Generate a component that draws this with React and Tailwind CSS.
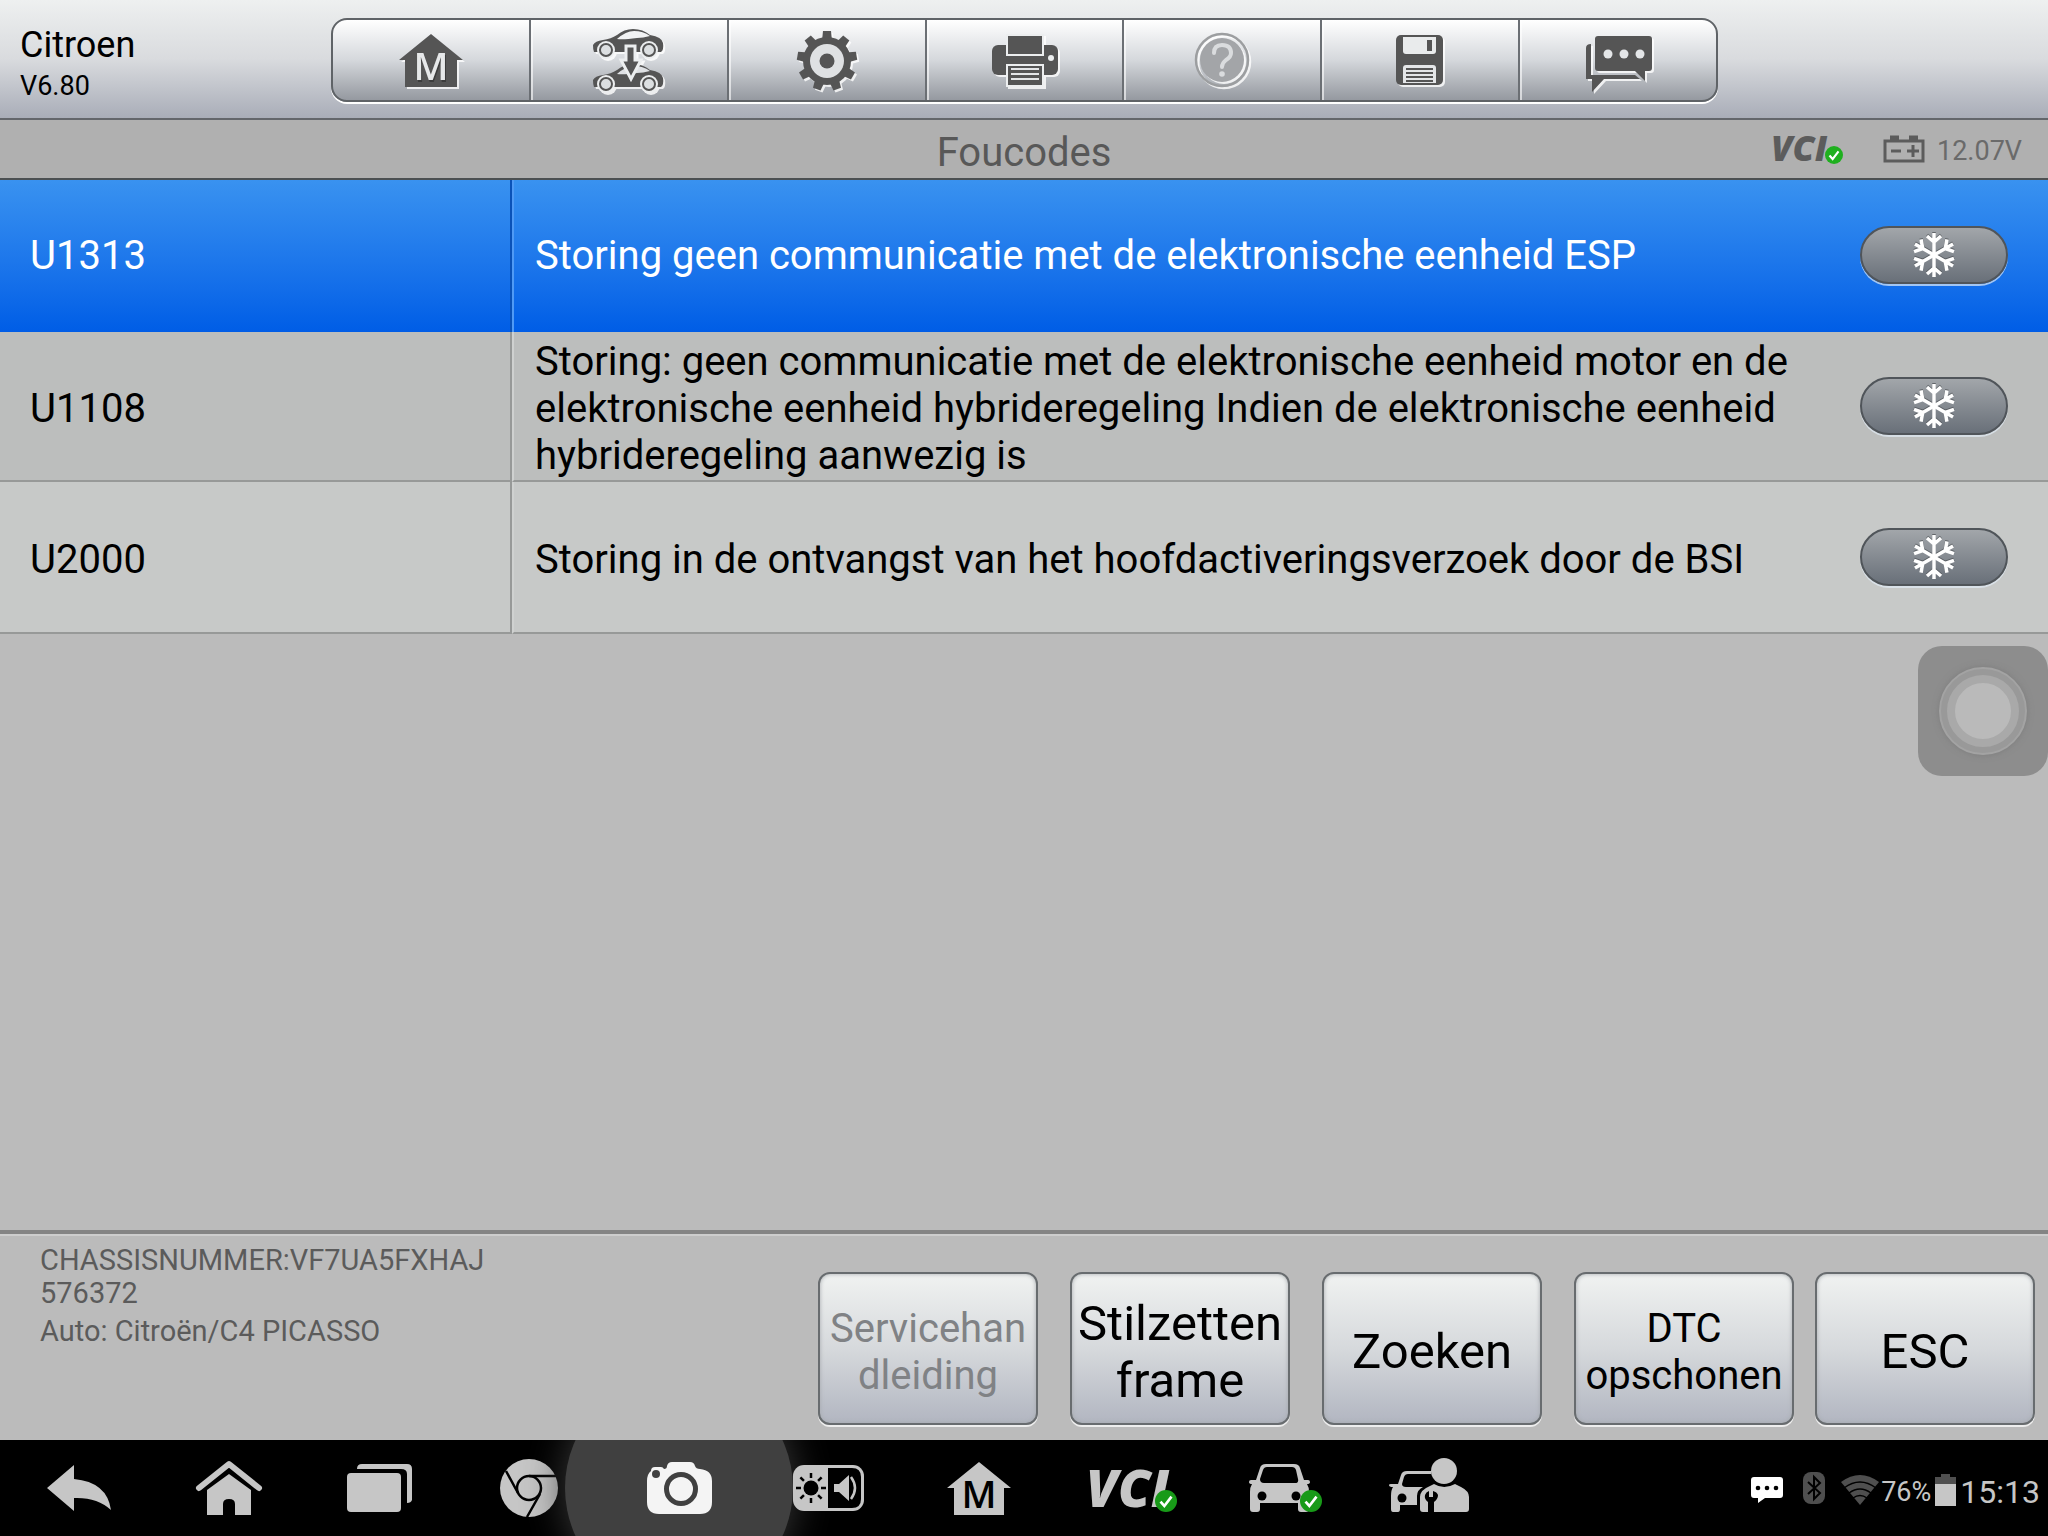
import React, { useState } from 'react';

const codes = [
  { code: 'U1313', text: 'Storing geen communicatie met de elektronische eenheid ESP' },
  {
    code: 'U1108',
    text: 'Storing: geen communicatie met de elektronische eenheid motor en de elektronische eenheid hybrideregeling Indien de elektronische eenheid hybrideregeling aanwezig is'
  },
  { code: 'U2000', text: 'Storing in de ontvangst van het hoofdactiveringsverzoek door de BSI' }
];

const actions = [
  { label: 'Servicehandleiding', lines: ['Servicehan', 'dleiding'], size: 'text-[40px] leading-[47px]', disabled: true },
  { label: 'Stilzetten frame', lines: ['Stilzetten', 'frame'], size: 'text-[49px] leading-[57px]' },
  { label: 'Zoeken', lines: ['Zoeken'], size: 'text-[49px] leading-[57px]' },
  { label: 'DTC opschonen', lines: ['DTC', 'opschonen'], size: 'text-[40px] leading-[47px]' },
  { label: 'ESC', lines: ['ESC'], size: 'text-[49px] leading-[57px]' }
];

function Check({ cx, cy, r, fill }) {
  return (
    <g>
      <circle cx={cx} cy={cy} r={r} fill={fill} />
      <path
        d={`M${cx - r * 0.5} ${cy + r * 0.05} l${r * 0.35} ${r * 0.4} l${r * 0.65} ${-r * 0.85}`}
        fill="none"
        stroke="#fff"
        strokeWidth={r * 0.24}
      />
    </g>
  );
}

/* Toolbar icons */

function HomeIcon() {
  return (
    <>
      <path d="M36 11 L68 37 H62 V64 H10 V37 H4 Z" />
      <text x="37" y="59" textAnchor="middle" fontSize="38" fontWeight="600" fill="#3c3c3c">M</text>
      <text x="36" y="57" textAnchor="middle" fontSize="38" fontWeight="600" fill="#e6e8e9">M</text>
    </>
  );
}

function SwapIcon() {
  const car = 'M0 22 Q2 18 10 17 Q18 16 24 12 Q31 6 40 6 Q50 6 57 12 Q69 14 70 20 Q71 27 68 29 H1 Q0 27 0 22 Z';
  const wheel = (cx, cy) => (
    <g key={cx + '-' + cy}>
      <circle cx={cx} cy={cy} r="9" fill="#eceeef" />
      <circle cx={cx} cy={cy} r="6" fill="#dcdfe1" stroke="#555" strokeWidth="2" />
    </g>
  );
  return (
    <>
      <path d={car} />
      <path d="M24 16 Q33 8 41 8 Q50 8 57 13 Q50 15 44 15 Q30 17 24 16 Z" fill="#f1f2f3" />
      <path d={car} transform="translate(0 35)" />
      <path d="M24 51 Q33 43 41 43 Q50 43 57 48 Q50 50 44 50 Q30 52 24 51 Z" fill="#dfe1e4" />
      {wheel(13, 27)}
      {wheel(56, 27)}
      {wheel(13, 61)}
      {wheel(56, 61)}
      <path d="M33 23 H42 V37 H48 L38 56 L28 37 H33 Z" stroke="#eceeef" strokeWidth="3" />
    </>
  );
}

function GearIcon() {
  return (
    <>
      {[0, 40, 80, 120, 160, 200, 240, 280, 320].map((a) => (
        <path key={a} d="M31 18 L32 8 H40 L41 18 Z" transform={`rotate(${a} 36 38)`} />
      ))}
      <circle cx="36" cy="38" r="24" />
      <circle cx="36" cy="38" r="17" fill="#dfe1e3" />
      <circle cx="36" cy="38" r="7.5" />
    </>
  );
}

function PrinterIcon() {
  return (
    <>
      <rect x="3" y="22" width="66" height="30" rx="6" />
      <rect x="18" y="12" width="36" height="20" stroke="#eceeef" strokeWidth="2" />
      <rect x="18" y="42" width="36" height="21" stroke="#eceeef" strokeWidth="2" />
      <path d="M22 46 H50 M22 51 H50 M22 56 H50" stroke="#e4e6e8" strokeWidth="2" />
      <circle cx="62" cy="35" r="3" fill="#eceeef" />
    </>
  );
}

function HelpIcon() {
  return (
    <>
      <circle cx="36" cy="37" r="26" fill="none" stroke="#9c9ea0" strokeWidth="2.5" />
      <circle cx="36" cy="37" r="22" fill="#a3a5a8" />
      <path
        d="M28 30 Q28 22 36 22 Q45 22 45 30 Q45 34 40 37 Q36 40 36 44"
        fill="none"
        stroke="#dadcde"
        strokeWidth="4"
        strokeLinecap="round"
      />
      <circle cx="36" cy="51" r="2.8" fill="#dadcde" />
    </>
  );
}

function SaveIcon() {
  return (
    <>
      <rect x="12" y="12" width="47" height="50" rx="5" />
      <path d="M19 14 H52 V28 Q52 31 49 31 H22 Q19 31 19 28 Z" fill="#e9ebec" />
      <rect x="43" y="17" width="5" height="11" />
      <path d="M19 60 V45 Q19 42 22 42 H49 Q52 42 52 45 V60 Z" fill="#e4e6e8" />
      <path d="M22 46 H49 M22 50 H49 M22 54 H49 M22 58 H49" stroke="#555" strokeWidth="2" />
    </>
  );
}

function ChatIcon() {
  return (
    <>
      <path d="M9 21 Q4 21 4 25 V56 H10 V69 L22 56 H58 L53 52 H9 Z" />
      <path d="M16 13 H67 Q70 13 70 16 V45 Q70 48 67 48 H63 V58 L53 48 H16 Q13 48 13 45 V16 Q13 13 16 13 Z" />
      <circle cx="26" cy="31" r="4.5" fill="#e4e6e8" />
      <circle cx="42" cy="31" r="4.5" fill="#e4e6e8" />
      <circle cx="58" cy="31" r="4.5" fill="#e4e6e8" />
    </>
  );
}

const tools = [
  { label: 'Home', Icon: HomeIcon },
  { label: 'Vehicle swap', Icon: SwapIcon },
  { label: 'Settings', Icon: GearIcon },
  { label: 'Print', Icon: PrinterIcon },
  { label: 'Help', Icon: HelpIcon, disabled: true },
  { label: 'Save', Icon: SaveIcon },
  { label: 'Data logging', Icon: ChatIcon }
];

/* Navigation bar icons */

function NavBack() {
  return <path d="M8 40 L35 17 V31 Q68 34 72 62 Q58 49 35 50 V63 Z" />;
}

function NavHome() {
  return (
    <>
      <path d="M10 40 L40 16 L70 40" fill="none" stroke="#c6c6c6" strokeWidth="6" strokeLinecap="round" strokeLinejoin="round" />
      <path d="M40 26 L62 42 V67 H46 V56 Q46 51 40 51 Q34 51 34 56 V67 H18 V42 Z" />
    </>
  );
}

function NavRecents() {
  return (
    <>
      <rect x="8" y="25" width="54" height="39" rx="4" />
      <path d="M18 21 Q18 16 23 16 H68 Q73 16 73 21 V52 Q72 55 68 55 V26 Q68 21 62 21 Z" />
    </>
  );
}

function NavChrome() {
  return (
    <>
      <circle cx="40" cy="40" r="29" />
      <circle cx="40" cy="40" r="12" fill="none" stroke="#000" strokeWidth="2.5" />
      <path d="M40 28 H67 M29 45 L17 23 M51 46 L38 69" fill="none" stroke="#000" strokeWidth="2.5" />
    </>
  );
}

function NavCamera() {
  return (
    <>
      <path
        d="M12 23 Q12 19 16 19 H22 Q24 19 25 21 Q28 21 28 18 Q29 14 33 14 H51 Q55 14 56 18 Q57 21 61 21 Q73 22 73 33 V54 Q73 66 61 66 H20 Q8 66 8 54 V33 Q8 26 12 23 Z"
        fill="#f4f4f4"
      />
      <circle cx="42" cy="41" r="14.5" fill="none" stroke="#404040" strokeWidth="5" />
      <circle cx="17" cy="26" r="4" fill="#404040" />
    </>
  );
}

function NavBrightness() {
  return (
    <>
      <rect x="4" y="17" width="71" height="46" rx="11" />
      <path d="M39 20 H63 Q72 20 72 29 V51 Q72 60 63 60 H39 Z" fill="#000" />
      <circle cx="22" cy="40" r="7.5" fill="#000" />
      {[0, 45, 90, 135, 180, 225, 270, 315].map((a) => (
        <path key={a} d="M22 25 V30" stroke="#000" strokeWidth="2.5" transform={`rotate(${a} 22 40)`} />
      ))}
      <path d="M45 36 H50 L60 27 V53 L50 44 H45 Z" />
      <path d="M62 29 Q70 40 62 51" fill="none" stroke="#c6c6c6" strokeWidth="2.5" />
    </>
  );
}

function NavMaxi() {
  return (
    <>
      <path d="M40 14 L72 40 H65 V67 H15 V40 H8 Z" />
      <text x="40" y="60" textAnchor="middle" fontSize="38" fontWeight="600" fill="#000">M</text>
    </>
  );
}

function NavVci() {
  return (
    <>
      <text x="-3" y="59" fontSize="52" fontWeight="800" fontStyle="italic">VCI</text>
      <Check cx={77} cy={53} r={11} fill="#189a18" />
    </>
  );
}

function NavCar() {
  return (
    <>
      <path
        fillRule="evenodd"
        d="M27 16 H55 Q60 16 61 20 L65 32 H69 Q71 32 71 34 Q71 36 68 36 Q70 39 70 44 V61 Q70 64 67 64 H62 Q59 64 59 61 V55 H21 V61 Q21 64 18 64 H14 Q11 64 11 61 V44 Q11 39 13 36 Q10 36 10 34 Q10 32 12 32 H17 L21 20 Q22 16 27 16 Z M28 19 Q25 19 24 22 L21 31 Q21 35 25 35 H56 Q60 35 59 31 L57 22 Q56 19 53 19 Z"
      />
      <circle cx="23" cy="48" r="4.5" fill="#000" />
      <circle cx="57" cy="48" r="4.5" fill="#000" />
      <Check cx={72} cy={53} r={11} fill="#189a18" />
    </>
  );
}

function NavSupport() {
  return (
    <>
      <path
        fillRule="evenodd"
        d="M18 23 H42 V26 H19 Q16 26 15 29 L13 36 Q13 39 17 39 H34 Q28 42 28 48 V57 H11 V61 Q11 64 9 64 H4 Q2 64 2 61 V48 Q2 42 4 39 Q0 39 0 37 Q0 36 2 36 H9 L12 27 Q13 23 18 23 Z"
      />
      <circle cx="13" cy="50" r="4.5" fill="#000" />
      <circle cx="55" cy="23" r="13" />
      <path d="M31 61 V49 Q31 42 41 38 L45 36 Q55 42 66 36 L72 39 Q80 43 80 49 V61 Q80 64 77 64 H34 Q31 64 31 61 Z" />
      <path d="M39 64 V54 Q35 51 36 47 Q37 44 40 43 V49 H44 V43 Q48 44 49 47 Q49 51 45 54 V64 Z" fill="#000" />
    </>
  );
}

const navItems = [
  { label: 'Back', Icon: NavBack },
  { label: 'Android home', Icon: NavHome },
  { label: 'Recent apps', Icon: NavRecents },
  { label: 'Chrome', Icon: NavChrome },
  { label: 'Camera', Icon: NavCamera, active: true },
  { label: 'Display and sound', Icon: NavBrightness },
  { label: 'MaxiSys home', Icon: NavMaxi },
  { label: 'VCI', Icon: NavVci },
  { label: 'Maxi shortcut', Icon: NavCar },
  { label: 'Service', Icon: NavSupport }
];

function Snowflake() {
  return (
    <svg viewBox="0 0 48 48" className="size-12 drop-shadow-[0_-1px_0_rgba(70,74,78,0.7)]" aria-hidden="true">
      {[0, 60, 120, 180, 240, 300].map((a) => (
        <path
          key={a}
          d="M24 24 V2 M17 5 L24 11 L31 5"
          fill="none"
          stroke="#fff"
          strokeWidth="3.5"
          transform={`rotate(${a} 24 24)`}
        />
      ))}
    </svg>
  );
}

function Header() {
  return (
    <header className="flex h-[120px] border-b-2 border-[#63666b] bg-linear-to-b from-[#eef0f0] via-[#d9dbde] to-[#a9adb8]">
      <div className="w-[331px] pl-5 pt-6 text-black">
        <h1 className="text-[36px] leading-[42px]">Citroen</h1>
        <p className="text-[27px] leading-10">V6.80</p>
      </div>
      <nav className="mt-[18px] flex h-[84px] w-[1387px] overflow-hidden rounded-2xl border-2 border-[#5f6367] bg-linear-to-b from-white via-[#d5d8dc] to-[#9599a0] shadow-[0_2px_0_#fff]">
        {tools.map(({ label, Icon, disabled }, i) => (
          <button
            key={label}
            aria-label={label}
            disabled={disabled}
            className={`flex flex-1 items-center justify-center pb-[2px] ${i < 6 ? 'border-r-2 border-[#6b6f74]' : ''} ${i > 0 ? 'shadow-[inset_2px_0_0_rgba(255,255,255,0.6)]' : ''}`}
          >
            <svg viewBox="0 0 72 72" className="size-[72px] overflow-visible fill-[#555] font-['Open_Sans',sans-serif] drop-shadow-[2px_2px_0_rgba(255,255,255,0.8)]">
              <Icon />
            </svg>
          </button>
        ))}
      </nav>
    </header>
  );
}

function TitleBar() {
  return (
    <div className="grid h-[60px] grid-cols-[1fr_auto_1fr] items-center border-b-2 border-[#4c5052] bg-[#b0b0b0] text-[#585858]">
      <h2 className="col-start-2 pt-[6px] text-[40px] leading-[45px]">Foucodes</h2>
      <div className="flex items-center justify-end pr-[26px]">
        <svg viewBox="0 0 76 36" className="mr-9 h-9 w-[76px] overflow-visible fill-[#5c5c5c] font-['Open_Sans',sans-serif]" role="img" aria-label="VCI connected">
          <text x="0" y="30" fontSize="35" fontWeight="800" fontStyle="italic">VCI</text>
          <Check cx={63} cy={24} r={9} fill="#1fb01f" />
        </svg>
        <svg viewBox="0 0 42 28" className="mr-3 h-7 w-[42px] fill-none stroke-[#5c5c5c]" aria-hidden="true">
          <path d="M2 6 H40 V26 H2 Z" strokeWidth="3" />
          <path d="M7 3 H16 M26 3 H35" strokeWidth="5" />
          <path d="M8 16 H18 M24 16 H36 M30 10 V22" strokeWidth="3" />
        </svg>
        <span className="pt-1 text-[27px] leading-8 text-[#6a6a6a]">12.07V</span>
      </div>
    </div>
  );
}

function CodeTable({ selected, onSelect }) {
  return (
    <table className="w-full table-fixed border-separate border-spacing-0 text-left text-[40px] leading-[47px]">
      <tbody>
        {codes.map((row, i) => {
          const active = i === selected;
          const height = i === 1 ? 'h-[150px]' : 'h-[152px]';
          const look = active
            ? 'bg-linear-to-b from-[#3992f0] to-[#005de6] text-white'
            : i % 2 ? 'bg-[#bcbebd] text-black' : 'bg-[#c7c9c8] text-black';
          const line = active ? 'pb-[2px]' : 'border-b-2 border-b-[#979998]';
          const drop = active ? '' : 'pt-1';
          return (
            <tr key={row.code} onClick={() => onSelect(i)} className={`${height} ${look}`}>
              <th scope="row" className={`w-1/4 border-r-2 pl-[30px] font-normal ${line} ${drop} ${active ? 'border-r-[#0a52b8]' : 'border-r-[#979998]'}`}>
                {row.code}
              </th>
              <td className={`border-l-2 pl-[21px] ${line} ${drop} ${active ? 'border-l-[#4f9af5]' : 'border-l-[#cfd1d0]'}`}>{row.text}</td>
              <td className={`w-[228px] pl-10 ${line}`}>
                <button
                  aria-label={`Freeze frame ${row.code}`}
                  className="flex h-[58px] w-[148px] items-center justify-center rounded-full border-2 border-[#50555a] bg-linear-to-b from-[#a2a6aa] to-[#697079] shadow-[0_2px_0_rgba(225,235,245,0.7)]"
                >
                  <Snowflake />
                </button>
              </td>
            </tr>
          );
        })}
      </tbody>
    </table>
  );
}

function Footer() {
  return (
    <footer className="flex h-[210px] justify-between border-t-4 border-[#848484] bg-[#bbbbbb] pr-[13px] shadow-[inset_0_2px_0_#cdcdcd]">
      <div className="w-[500px] pl-10 pt-[10px] text-[29px] leading-[33px] text-[#5b5b5b]">
        <p>CHASSISNUMMER:VF7UA5FXHAJ<br />576372</p>
        <p className="pt-[5px]">Auto: Citroën/C4 PICASSO</p>
      </div>
      <div className="flex gap-8 pt-[38px]">
        {actions.map((a, i) => (
          <button
            key={a.label}
            disabled={a.disabled}
            className={`h-[153px] w-[220px] whitespace-nowrap rounded-xl border-2 border-[#686c6f] bg-linear-to-b from-[#f0f2f1] via-[#d6d9dc] to-[#b2b6c1] pt-[6px] text-center shadow-[0_2px_0_#eee,inset_0_0_4px_#a5a9ad] ${a.size} ${a.disabled ? 'text-[#808285]' : 'text-black'} ${i === 4 ? '-ml-[11px]' : ''}`}
          >
            {a.lines.map((l) => (
              <span key={l} className="-mx-1 block">{l}</span>
            ))}
          </button>
        ))}
      </div>
    </footer>
  );
}

function NavBar() {
  return (
    <nav className="flex h-24 items-center justify-between overflow-hidden bg-black pl-1 text-[#c6c6c6]">
      <div className="flex">
        {navItems.map(({ label, Icon, active }) => (
          <button key={label} aria-label={label} className="relative flex h-24 w-[150px] items-center justify-center">
            {active && (
              <span className="absolute -left-[39px] -top-[66px] size-[228px] rounded-full bg-[#404040] shadow-[0_0_40px_#3a3a3a]" />
            )}
            <svg viewBox="0 0 80 80" className="relative size-20 overflow-visible fill-[#c6c6c6] font-['Open_Sans',sans-serif]">
              <Icon />
            </svg>
          </button>
        ))}
      </div>
      <div className="flex items-center pr-2 pt-1">
        <svg viewBox="0 0 32 26" className="mr-5 h-[26px] w-8" aria-hidden="true">
          <path d="M3 0 H29 Q32 0 32 3 V18 Q32 21 29 21 H14 L7 26 V21 H3 Q0 21 0 18 V3 Q0 0 3 0 Z" fill="#fff" />
          <circle cx="7" cy="11" r="2.3" />
          <circle cx="16" cy="11" r="2.3" />
          <circle cx="25" cy="11" r="2.3" />
        </svg>
        <svg viewBox="0 0 22 32" className="mb-1 mr-4 h-8 w-[22px]" aria-hidden="true">
          <rect width="22" height="32" rx="8" fill="#4f4f4f" />
          <path d="M5 10 L17 21 L11 27 V5 L17 11 L5 22" fill="none" stroke="#000" strokeWidth="2" />
        </svg>
        <svg viewBox="0 0 38 30" className="mr-[2px] h-[30px] w-[38px]" aria-hidden="true">
          <path d="M19 30 L0 7 Q19 -7 38 7 Z" fill="#4f4f4f" />
          <path d="M3 13 Q19 1 35 13 M8 18 Q19 10 30 18 M12 23 Q19 18 26 23" fill="none" stroke="#000" strokeWidth="1.5" />
        </svg>
        <span className="pt-1 text-[27px] leading-8">76%</span>
        <svg viewBox="0 0 21 32" className="mx-1 h-8 w-[21px]" aria-hidden="true">
          <path d="M6 0 H15 V3 H21 V10 H0 V3 H6 Z" fill="#4f4f4f" />
          <rect y="10" width="21" height="22" fill="#c6c6c6" />
        </svg>
        <time className="pt-1 text-[32px] leading-9">15:13</time>
      </div>
    </nav>
  );
}

export default function App() {
  const [selected, setSelected] = useState(0);

  return (
    <div className="flex min-h-screen flex-col bg-[#bbbbbb] font-[Roboto,sans-serif]">
      <Header />
      <TitleBar />
      <main className="relative flex-1">
        <CodeTable selected={selected} onSelect={setSelected} />
        {/* Floating assistive button */}
        <button aria-label="Assistive touch" className="absolute right-0 top-[466px] flex size-[130px] items-center justify-center rounded-3xl bg-[#8d8d8d]">
          <span className="flex size-[88px] items-center justify-center rounded-full border-2 border-[#a3a3a3] bg-[#999] shadow-[0_0_6px_#7d7d7d]">
            <span className="size-[72px] rounded-full border-8 border-[#a9a9a9] bg-[#bababa]" />
          </span>
        </button>
      </main>
      <Footer />
      <NavBar />
    </div>
  );
}
